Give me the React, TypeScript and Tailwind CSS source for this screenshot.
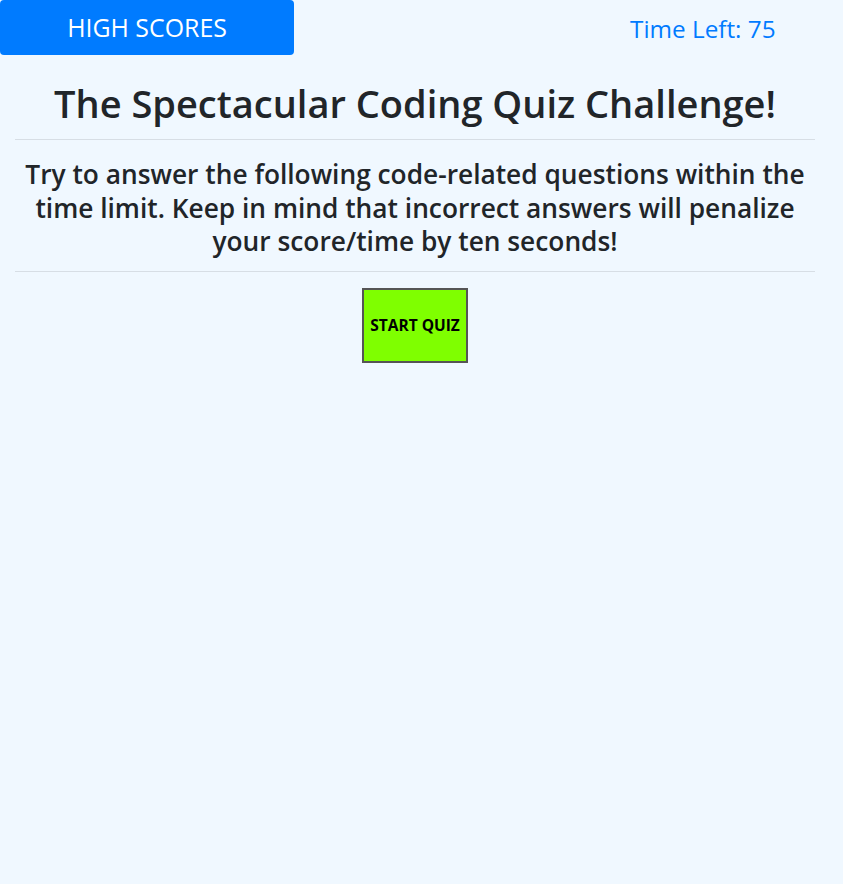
export default function App() {
  return (
    <div className="min-h-[884px] w-full bg-[#f0f8ff]" style={{ fontFamily: '"Open Sans", "Noto Sans", sans-serif' }}>
      <div className="flex h-[55px] items-center">
        <button className="h-[55px] w-[294px] rounded-[4px] bg-[#007bff] text-[24.9px] text-white">HIGH SCORES</button>
        <div className="ml-[336px] pt-[3px] text-[24.3px] text-[#007bff]">Time Left: 75</div>
      </div>
      <div className="w-[800px] mx-[15px]">
        <h1 className="mt-[24px] h-[48px] text-center text-[38px] font-semibold leading-[48px] text-[#212529]">The Spectacular Coding Quiz Challenge!</h1>
        <hr className="mt-[12px] border-t border-black/10" />
        <p className="mt-[18px] h-[101px] text-center text-[26.3px] font-semibold leading-[33.6px] text-[#212529]">
          Try to answer the following code-related questions within the time limit. Keep in mind that incorrect answers will penalize your score/time by ten seconds!
        </p>
        <hr className="mt-[12px] border-t border-black/10" />
        <div className="mt-[16px] flex justify-center">
          <button className="h-[75px] w-[106px] border-2 border-[#555] bg-[#7fff00] text-[15.5px] font-bold text-black">START QUIZ</button>
        </div>
      </div>
    </div>
  );
}
